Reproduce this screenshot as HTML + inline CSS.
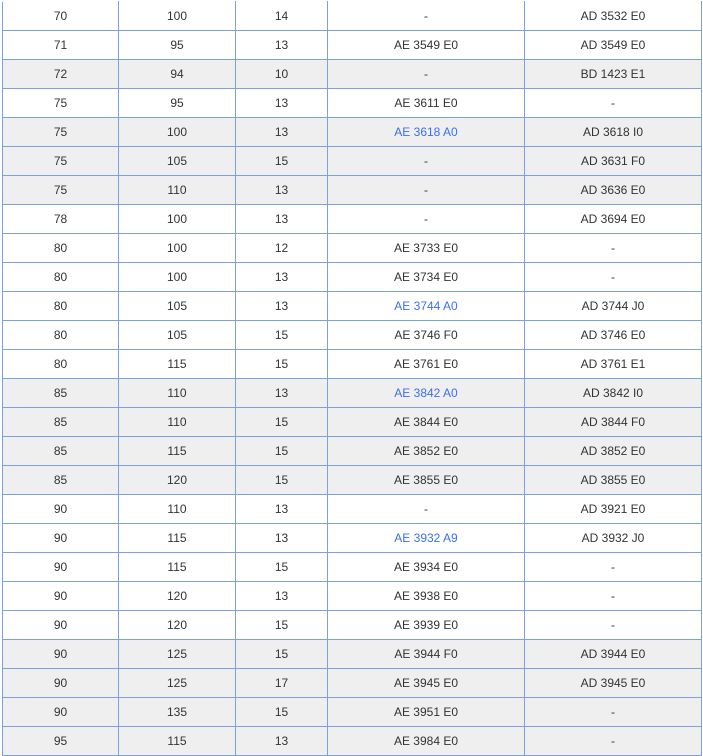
<!DOCTYPE html>
<html><head><style>
body{margin:0;background:#fff;width:703px;height:753px;overflow:hidden}
table{position:absolute;left:2px;top:1px;border-collapse:collapse;table-layout:fixed;font:12px "Liberation Sans",Arial,sans-serif;color:#333}
td{border:1px solid #7ca2dc;height:28px;padding:0;text-align:center}
tr:first-child td{border-top-color:#fff}
tr.g td{background:#efefef}
a{color:#3b6ff0;text-decoration:none}
</style></head><body>
<table>
<colgroup><col style="width:116px"><col style="width:117px"><col style="width:92px"><col style="width:197px"><col style="width:177px"></colgroup>
<tr><td>70</td><td>100</td><td>14</td><td>-</td><td>AD 3532 E0</td></tr>
<tr><td>71</td><td>95</td><td>13</td><td>AE 3549 E0</td><td>AD 3549 E0</td></tr>
<tr class="g"><td>72</td><td>94</td><td>10</td><td>-</td><td>BD 1423 E1</td></tr>
<tr><td>75</td><td>95</td><td>13</td><td>AE 3611 E0</td><td>-</td></tr>
<tr class="g"><td>75</td><td>100</td><td>13</td><td><a>AE 3618 A0</a></td><td>AD 3618 I0</td></tr>
<tr class="g"><td>75</td><td>105</td><td>15</td><td>-</td><td>AD 3631 F0</td></tr>
<tr class="g"><td>75</td><td>110</td><td>13</td><td>-</td><td>AD 3636 E0</td></tr>
<tr><td>78</td><td>100</td><td>13</td><td>-</td><td>AD 3694 E0</td></tr>
<tr><td>80</td><td>100</td><td>12</td><td>AE 3733 E0</td><td>-</td></tr>
<tr><td>80</td><td>100</td><td>13</td><td>AE 3734 E0</td><td>-</td></tr>
<tr><td>80</td><td>105</td><td>13</td><td><a>AE 3744 A0</a></td><td>AD 3744 J0</td></tr>
<tr><td>80</td><td>105</td><td>15</td><td>AE 3746 F0</td><td>AD 3746 E0</td></tr>
<tr><td>80</td><td>115</td><td>15</td><td>AE 3761 E0</td><td>AD 3761 E1</td></tr>
<tr class="g"><td>85</td><td>110</td><td>13</td><td><a>AE 3842 A0</a></td><td>AD 3842 I0</td></tr>
<tr class="g"><td>85</td><td>110</td><td>15</td><td>AE 3844 E0</td><td>AD 3844 F0</td></tr>
<tr class="g"><td>85</td><td>115</td><td>15</td><td>AE 3852 E0</td><td>AD 3852 E0</td></tr>
<tr class="g"><td>85</td><td>120</td><td>15</td><td>AE 3855 E0</td><td>AD 3855 E0</td></tr>
<tr><td>90</td><td>110</td><td>13</td><td>-</td><td>AD 3921 E0</td></tr>
<tr><td>90</td><td>115</td><td>13</td><td><a>AE 3932 A9</a></td><td>AD 3932 J0</td></tr>
<tr><td>90</td><td>115</td><td>15</td><td>AE 3934 E0</td><td>-</td></tr>
<tr><td>90</td><td>120</td><td>13</td><td>AE 3938 E0</td><td>-</td></tr>
<tr><td>90</td><td>120</td><td>15</td><td>AE 3939 E0</td><td>-</td></tr>
<tr class="g"><td>90</td><td>125</td><td>15</td><td>AE 3944 F0</td><td>AD 3944 E0</td></tr>
<tr class="g"><td>90</td><td>125</td><td>17</td><td>AE 3945 E0</td><td>AD 3945 E0</td></tr>
<tr class="g"><td>90</td><td>135</td><td>15</td><td>AE 3951 E0</td><td>-</td></tr>
<tr class="g"><td>95</td><td>115</td><td>13</td><td>AE 3984 E0</td><td>-</td></tr>
</table>
</body></html>
